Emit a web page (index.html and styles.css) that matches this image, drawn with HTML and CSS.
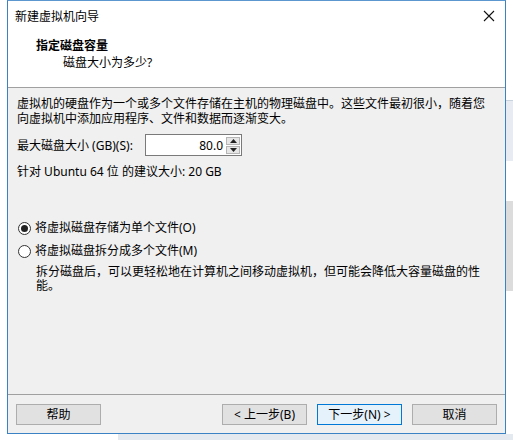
FILE: index.html
```html
<!DOCTYPE html>
<html lang="zh-CN">
<head>
<meta charset="utf-8">
<title>新建虚拟机向导</title>
<link rel="stylesheet" href="styles.css">
</head>
<body>
<div class="stage">
  <div class="row">
    <div class="window">
      <div class="titlebar">
        <span class="title">新建虚拟机向导</span>
        <svg class="close" width="12" height="12" viewBox="0 0 12 12"><path d="M1 1L11 11M11 1L1 11" stroke="#111" stroke-width="1.1" fill="none"/></svg>
      </div>
      <div class="header">
        <div class="h-title">指定磁盘容量</div>
        <div class="h-sub">磁盘大小为多少?</div>
      </div>
      <div class="body">
        <div class="para">
          <div class="line">虚拟机的硬盘作为一个或多个文件存储在主机的物理磁盘中。这些文件最初很小，随着您</div>
          <div class="line">向虚拟机中添加应用程序、文件和数据而逐渐变大。</div>
        </div>
        <div class="size-row">
          <span class="label">最大磁盘大小 (GB)(S):</span>
          <div class="spin">
            <span class="spin-val">80.0</span>
            <div class="spin-btns">
              <div class="sbtn"><svg width="7" height="4" viewBox="0 0 7 4"><path d="M0 4L3.5 0L7 4Z" fill="#222"/></svg></div>
              <div class="sbtn"><svg width="7" height="4" viewBox="0 0 7 4"><path d="M0 0L3.5 4L7 0Z" fill="#222"/></svg></div>
            </div>
          </div>
        </div>
        <div class="rec">针对 Ubuntu 64 位 的建议大小: 20 GB</div>
        <div class="radio r1"><span class="circle checked"></span><span>将虚拟磁盘存储为单个文件(O)</span></div>
        <div class="radio r2"><span class="circle"></span><span>将虚拟磁盘拆分成多个文件(M)</span></div>
        <div class="desc">
          <div class="line">拆分磁盘后，可以更轻松地在计算机之间移动虚拟机，但可能会降低大容量磁盘的性</div>
          <div class="line">能。</div>
        </div>
      </div>
      <div class="footer">
        <button class="btn">帮助</button>
        <div class="spacer"></div>
        <button class="btn">&lt; 上一步(B)</button>
        <button class="btn focus">下一步(N) &gt;</button>
        <button class="btn">取消</button>
      </div>
    </div>
    <div class="side">
      <div class="side-a"></div>
      <div class="side-b"></div>
      <div class="side-c"></div>
      <div class="side-d"></div>
    </div>
  </div>
  <div class="under">
    <div class="under-a"></div>
    <div class="under-b"></div>
  </div>
</div>
</body>
</html>
```
FILE: styles.css
```css
html, body {
  margin: 0;
  padding: 0;
  background: #ffffff;
}
body {
  font-family: "Noto Sans", "Noto Sans CJK SC", sans-serif;
  font-size: 12px;
  color: #000;
  width: 513px;
  height: 440px;
  overflow: hidden;
}
.stage {
  display: flex;
  flex-direction: column;
}
.row {
  display: flex;
  padding-left: 7px;
}
.window {
  width: 497px;
  height: 432px;
  border: 1px solid #3a82c4;
  border-top-color: #5c97cf;
  display: flex;
  flex-direction: column;
  background: #f0f0f0;
}
.titlebar {
  height: 29px;
  background: #fff;
  display: flex;
  align-items: center;
  justify-content: space-between;
  padding: 0 10px 0 7px;
}
.title {
  line-height: 15px;
  margin-top: 1px;
}
.close {
  margin-top: 1px;
}
.header {
  height: 57px;
  background: #fff;
  border-bottom: 1px solid #a0a0a0;
  padding-left: 28px;
  display: flex;
  flex-direction: column;
}
.h-title {
  font-weight: bold;
  line-height: 16px;
  margin-top: 8px;
}
.h-sub {
  line-height: 16px;
  margin-top: 1px;
  padding-left: 27px;
}
.body {
  flex: 1;
  padding: 0 9px;
  display: flex;
  flex-direction: column;
}
.line {
  height: 15px;
  line-height: 15px;
  white-space: nowrap;
}
.para {
  margin-top: 8px;
}
.size-row {
  display: flex;
  align-items: center;
  margin-top: 8px;
  height: 22px;
}
.label {
  width: 128px;
  white-space: nowrap;
}
.spin {
  width: 95px;
  height: 20px;
  border: 1px solid #7a7a7a;
  background: #fff;
  display: flex;
  align-items: center;
  justify-content: flex-end;
}
.spin-val {
  margin-right: 3px;
  line-height: 15px;
}
.spin-btns {
  display: flex;
  flex-direction: column;
  gap: 1px;
  margin-right: 1px;
}
.sbtn {
  width: 14px;
  height: 8px;
  background: #e6e6e6;
  border: 1px solid #b5b5b5;
  box-sizing: border-box;
  display: flex;
  align-items: center;
  justify-content: center;
}
.sbtn svg {
  display: block;
}
.rec {
  margin-top: 8px;
  height: 15px;
  line-height: 15px;
  white-space: nowrap;
}
.radio {
  display: flex;
  align-items: center;
  height: 16px;
  line-height: 16px;
  white-space: nowrap;
}
.r1 {
  margin-top: 41px;
}
.r2 {
  margin-top: 7px;
}
.circle {
  width: 11px;
  height: 11px;
  border: 1px solid #333;
  border-radius: 50%;
  background: #fff;
  margin: 0 4px 0 1px;
  display: flex;
  align-items: center;
  justify-content: center;
  box-sizing: content-box;
}
.circle.checked::after {
  content: "";
  width: 7px;
  height: 7px;
  border-radius: 50%;
  background: #222;
}
.desc {
  margin: 6px 0 0 19px;
}
.desc .line {
  height: 14px;
  line-height: 14px;
}
.footer {
  height: 39px;
  border-top: 1px solid #a0a0a0;
  display: flex;
  align-items: flex-start;
  padding: 9px 8px 0 8px;
  box-sizing: border-box;
  gap: 10px;
}
.spacer {
  flex: 1;
}
.btn {
  width: 85px;
  height: 21px;
  background: #e1e1e1;
  border: 1px solid #adadad;
  font-family: "Noto Sans", "Noto Sans CJK SC", sans-serif;
  font-size: 12px;
  color: #000;
  padding: 0;
  line-height: 17px;
}
.btn.focus {
  border-color: #0078d7;
  background: #e5f1fb;
}
.side {
  flex: 1;
  display: flex;
  flex-direction: column;
}
.side-a {
  height: 100px;
  background: #ffffff;
}
.side-b {
  height: 60px;
  background: #e8ecf2;
  border-top: 1px solid #c9d3de;
}
.side-c {
  height: 40px;
  background: #ffffff;
}
.side-d {
  height: 90px;
  background: #dcdcdc;
}
.under {
  display: flex;
  height: 7px;
}
.under-a {
  width: 118px;
  background: #ffffff;
}
.under-b {
  flex: 1;
  background: #e4e9ef;
}
```
